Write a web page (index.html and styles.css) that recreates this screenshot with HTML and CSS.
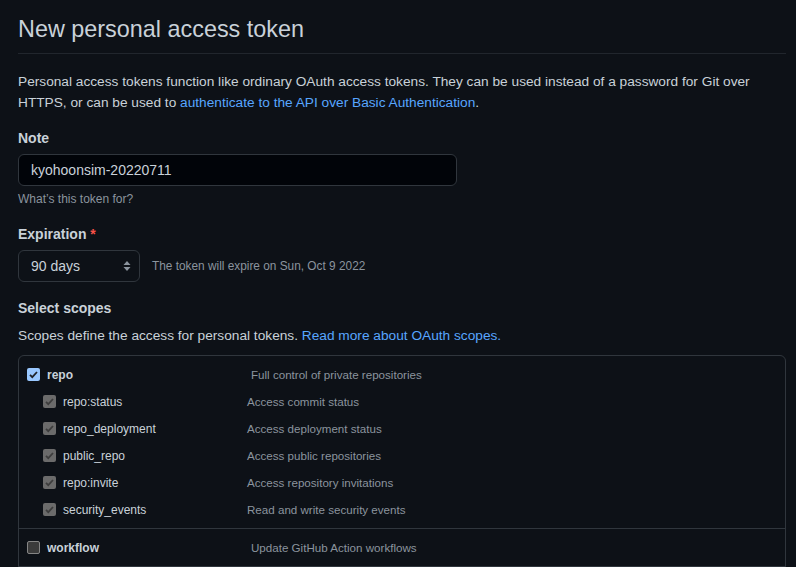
FILE: index.html
```html
<!DOCTYPE html>
<html lang="en">
<head>
<meta charset="utf-8">
<title>New personal access token</title>
<link rel="stylesheet" href="styles.css">
</head>
<body>
<div class="page">
  <div class="subhead">
    <h1 class="subhead-title">New personal access token</h1>
  </div>
  <p class="intro"><span>Personal access tokens function like ordinary OAuth access tokens. They can be used instead of a password for Git over HTTPS, or can be used to</span> <a href="#" class="link">authenticate to the API over Basic Authentication</a>.</p>

  <div class="field">
    <label class="field-label">Note</label>
    <div class="input">kyohoonsim-20220711</div>
    <p class="hint">What’s this token for?</p>
  </div>

  <div class="field field-exp">
    <label class="field-label">Expiration <span class="req">*</span></label>
    <div class="exp-row">
      <div class="select">
        <span>90 days</span>
        <svg class="select-arrows" width="8" height="12" viewBox="0 0 8 12"><path d="M4 1 L7.5 5 H0.5 Z" fill="#8b949e"/><path d="M4 11 L7.5 7 H0.5 Z" fill="#8b949e"/></svg>
      </div>
      <span class="exp-note">The token will expire on Sun, Oct 9 2022</span>
    </div>
  </div>

  <div class="field field-scopes">
    <label class="field-label">Select scopes</label>
    <p class="scopes-desc">Scopes define the access for personal tokens. <a href="#" class="link">Read more about OAuth scopes.</a></p>
  </div>

  <div class="scopes-box">
    <div class="scope-group">
      <div class="scope-row top">
        <div class="scope-name">
          <span class="cb cb-on"><svg width="13" height="13" viewBox="0 0 13 13"><path d="M3 6.8 L5.3 9.1 L10 4" fill="none" stroke="#1f2328" stroke-width="1.8"/></svg></span>
          <span class="name-text bold">repo</span>
        </div>
        <span class="scope-desc">Full control of private repositories</span>
      </div>
      <div class="scope-row sub">
        <div class="scope-name">
          <span class="cb cb-dis"><svg width="13" height="13" viewBox="0 0 13 13"><path d="M3 6.8 L5.3 9.1 L10 4" fill="none" stroke="#3d3d3d" stroke-width="1.8"/></svg></span>
          <span class="name-text">repo:status</span>
        </div>
        <span class="scope-desc">Access commit status</span>
      </div>
      <div class="scope-row sub">
        <div class="scope-name">
          <span class="cb cb-dis"><svg width="13" height="13" viewBox="0 0 13 13"><path d="M3 6.8 L5.3 9.1 L10 4" fill="none" stroke="#3d3d3d" stroke-width="1.8"/></svg></span>
          <span class="name-text">repo_deployment</span>
        </div>
        <span class="scope-desc">Access deployment status</span>
      </div>
      <div class="scope-row sub">
        <div class="scope-name">
          <span class="cb cb-dis"><svg width="13" height="13" viewBox="0 0 13 13"><path d="M3 6.8 L5.3 9.1 L10 4" fill="none" stroke="#3d3d3d" stroke-width="1.8"/></svg></span>
          <span class="name-text">public_repo</span>
        </div>
        <span class="scope-desc">Access public repositories</span>
      </div>
      <div class="scope-row sub">
        <div class="scope-name">
          <span class="cb cb-dis"><svg width="13" height="13" viewBox="0 0 13 13"><path d="M3 6.8 L5.3 9.1 L10 4" fill="none" stroke="#3d3d3d" stroke-width="1.8"/></svg></span>
          <span class="name-text">repo:invite</span>
        </div>
        <span class="scope-desc">Access repository invitations</span>
      </div>
      <div class="scope-row sub">
        <div class="scope-name">
          <span class="cb cb-dis"><svg width="13" height="13" viewBox="0 0 13 13"><path d="M3 6.8 L5.3 9.1 L10 4" fill="none" stroke="#3d3d3d" stroke-width="1.8"/></svg></span>
          <span class="name-text">security_events</span>
        </div>
        <span class="scope-desc">Read and write security events</span>
      </div>
    </div>
    <div class="scope-group">
      <div class="scope-row top">
        <div class="scope-name">
          <span class="cb cb-off"></span>
          <span class="name-text bold">workflow</span>
        </div>
        <span class="scope-desc">Update GitHub Action workflows</span>
      </div>
    </div>
  </div>
</div>
</body>
</html>
```

FILE: styles.css
```css
html, body {
  margin: 0;
  padding: 0;
  background: #0d1117;
}
body {
  color: #c9d1d9;
  font-family: "Liberation Sans", Arial, sans-serif;
  font-size: 13.7px;
  line-height: 21px;
  height: 567px;
  overflow: hidden;
}
.page {
  width: 768px;
  padding: 10px 0 0 18px;
}
.subhead {
  border-bottom: 1px solid #21262d;
  padding-bottom: 7px;
}
.subhead-title {
  margin: 0;
  font-size: 23.4px;
  line-height: 36px;
  font-weight: 400;
  padding-top: 1px;
  height: 35px;
}
.intro {
  margin: 17px 0 0;
}
.link {
  color: #58a6ff;
  text-decoration: none;
}
.field {
  margin-top: 15px;
}
.field-exp, .field-scopes {
  margin-top: 16px;
}
.field-label {
  display: block;
  font-weight: 700;
  font-size: 14px;
  margin-bottom: 5px;
}
.req {
  color: #f85149;
}
.input {
  width: 425px;
  height: 30px;
  border: 1px solid #30363d;
  border-radius: 6px;
  background: #010409;
  padding: 0 0 0 12px;
  font-size: 14px;
  line-height: 30px;
}
.hint {
  margin: 4px 0 0;
  font-size: 12px;
  line-height: 18px;
  color: #8b949e;
}
.exp-row {
  display: flex;
  align-items: center;
  gap: 12px;
}
.select {
  display: flex;
  align-items: center;
  justify-content: space-between;
  width: 100px;
  height: 30px;
  padding: 0 8px 0 12px;
  border: 1px solid #30363d;
  border-radius: 6px;
  background: #0d1117;
  font-size: 14px;
}
.exp-note {
  font-size: 11.85px;
  color: #8b949e;
}
.field-scopes .field-label {
  margin-bottom: 6px;
}
.scopes-desc {
  margin: 0;
}
.scopes-box {
  margin-top: 9px;
  border: 1px solid #30363d;
  border-radius: 6px;
  height: 260px;
}
.scope-group {
  padding: 5px 0;
  border-bottom: 1px solid #30363d;
}
.scope-row {
  display: flex;
  align-items: center;
  height: 27px;
}
.scope-name {
  display: flex;
  align-items: center;
  gap: 7px;
  font-size: 12px;
}
.name-text {
  padding-top: 2px;
}
.top .scope-name {
  padding-left: 8px;
  width: 224px;
}
.sub .scope-name {
  padding-left: 24px;
  width: 204px;
}
.bold {
  font-weight: 700;
  font-size: 12px;
}
.scope-desc {
  font-size: 11.6px;
  color: #8b949e;
}
.cb {
  display: block;
  width: 13px;
  height: 13px;
  border-radius: 2px;
  box-sizing: border-box;
  flex: none;
}
.cb svg {
  display: block;
}
.cb-on {
  background: #99c8ff;
}
.cb-dis {
  background: #6b6b6b;
}
.cb-off {
  background: #3b3b3b;
  border: 1px solid #858585;
}
```
